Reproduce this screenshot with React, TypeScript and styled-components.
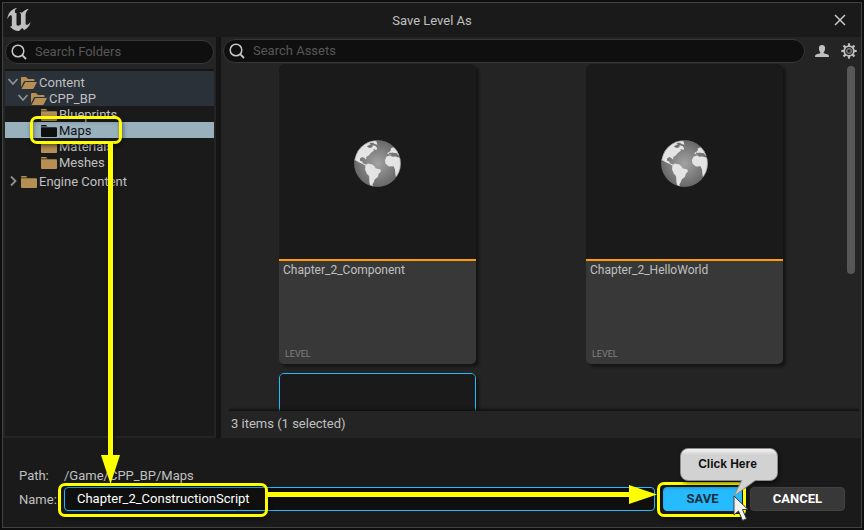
import React from "react";
import styled, { createGlobalStyle, css } from "styled-components";

const GlobalStyle = createGlobalStyle`
  *, *::before, *::after { box-sizing: border-box; }
  body {
    margin: 0;
    background: #0e0e0e;
    color: #c0c0c0;
    font-family: Roboto, "Liberation Sans", sans-serif;
    font-size: 13px;
    line-height: 16px;
  }
  button, input { font: inherit; color: inherit; }
`;

const Page = styled.div`
  height: 100vh;
  padding: 2px;
`;

const Dialog = styled.main`
  position: relative;
  display: flex;
  flex-direction: column;
  height: 100%;
  border: 1px solid #424242;
  background: #1a1a1a;
`;

const TitleBar = styled.header`
  display: grid;
  grid-template-columns: 40px 1fr 40px;
  align-items: center;
  height: 34px;
  flex: none;
`;

const Logo = styled.svg`
  width: 24px;
  height: 24px;
  margin-left: 4px;
`;

const Title = styled.h1`
  margin: 0;
  padding-top: 2px;
  font-size: 13px;
  font-weight: 400;
  text-align: center;
`;

const IconButton = styled.button`
  display: grid;
  place-items: center;
  width: 20px;
  height: 20px;
  padding: 0;
  border: 0;
  background: none;
`;

const CloseButton = styled(IconButton)`
  justify-self: end;
  margin-right: 11px;
`;

const Body = styled.div`
  display: flex;
  flex: 1;
  min-height: 0;
  gap: 5px;
  background: #141414;
`;

const FolderPanel = styled.section`
  display: flex;
  flex-direction: column;
  width: 213px;
  flex: none;
  padding: 3px 2px 2px;
  background: #242424;
`;

const SearchBox = styled.label`
  display: flex;
  align-items: center;
  gap: 8px;
  height: 24px;
  flex: 1;
  padding: 0 5px;
  border: 1px solid #383838;
  border-radius: 12px;
  background: #0f0f0f;
`;

const SearchInput = styled.input`
  flex: 1;
  min-width: 0;
  padding: 0;
  border: 0;
  outline: 0;
  background: none;
  &::placeholder { color: #575757; opacity: 1; }
`;

const SearchRow = styled.div`
  display: flex;
  flex: none;
`;

const Tree = styled.ul`
  flex: 1;
  margin: 5px 0 0;
  padding: 0;
  list-style: none;
  border-top: 2px solid #161616;
  background: #1a1a1a;
`;

const TreeRow = styled.li<{ $tone?: "path" | "selected"; $root?: boolean }>`
  position: relative;
  padding-top: ${(p) => (p.$root ? "3px" : "0")};
  ${(p) => p.$tone === "path" && css`background: #2b3139;`}
  ${(p) => p.$tone === "selected" && css`background: #99b1bd; color: #0f0f0f;`}
`;

const TreeButton = styled.button<{ $depth: number }>`
  display: flex;
  align-items: center;
  width: 100%;
  height: 16px;
  padding: 2px 0 0 ${(p) => 2 + p.$depth * 10}px;
  border: 0;
  background: none;
  text-align: left;
  white-space: nowrap;
`;

const Chevron = styled.svg`
  width: 12px;
  height: 12px;
  margin-right: 1px;
  flex: none;
`;

const FolderGlyph = styled.svg`
  width: 18px;
  height: 14px;
  margin-right: 1px;
  flex: none;
`;

const highlight = css`
  border: 3px solid #ffff00;
  border-radius: 7px;
  box-shadow: 1px 2px 4px rgba(0, 0, 0, 0.5), inset 1px 2px 4px rgba(0, 0, 0, 0.35);
  pointer-events: none;
`;

const FolderHighlight = styled.span`
  ${highlight}
  position: absolute;
  z-index: 2;
  left: 25px;
  top: -6px;
  width: 92px;
  height: 28px;
`;

const AssetPanel = styled.section`
  display: flex;
  flex-direction: column;
  flex: 1;
  min-width: 0;
  background: #242424;
`;

const AssetToolbar = styled.div`
  display: flex;
  align-items: center;
  flex: none;
  gap: 7px;
  padding: 2px 2px 0 2px;
`;

const AssetView = styled.div`
  display: flex;
  flex: 1;
  min-height: 0;
  margin-right: 6px;
  overflow: hidden;
`;

const AssetGrid = styled.div`
  display: grid;
  flex: 1;
  grid-template-columns: 1fr 1fr;
  justify-items: center;
  align-content: start;
  gap: 9px 0;
  padding: 1px 9px 0 3px;
`;

const Card = styled.article<{ $selected?: boolean }>`
  display: flex;
  flex-direction: column;
  width: 197px;
  height: 300px;
  overflow: hidden;
  border-radius: 5px;
  border: ${(p) => (p.$selected ? "1px solid #26bbff" : "0")};
  background: #383838;
  box-shadow: 3px 3px 3px rgba(0, 0, 0, 0.45);
`;

const Thumb = styled.div`
  display: grid;
  place-items: center;
  height: 197px;
  flex: none;
  padding-top: 3px;
  border-bottom: 2px solid #ff9c00;
  background: #1a1a1a;
`;

const CardInfo = styled.div`
  display: flex;
  flex: 1;
  flex-direction: column;
  justify-content: space-between;
  padding: 1px 4px 4px;
`;

const CardName = styled.h2`
  margin: 0;
  font-size: 12px;
  font-weight: 400;
`;

const CardType = styled.span`
  padding-left: 2px;
  color: #808080;
  font-size: 9px;
  line-height: 12px;
`;

const ScrollThumb = styled.div`
  width: 8px;
  height: 208px;
  margin-top: 3px;
  border-radius: 4px;
  background: #575757;
  flex: none;
`;

const StatusBar = styled.div`
  flex: none;
  position: relative;
  margin-left: 7px;
  padding: 5px 3px 6px;
  background: #242424;
  box-shadow: 0 -1px 3px #0a0a0a;
  clip-path: inset(-5px 2px 0 0);
`;

const Footer = styled.form`
  display: grid;
  grid-template-columns: 45px 1fr auto;
  align-items: center;
  gap: 3px 0;
  flex: none;
  padding: 30px 16px 16px;
`;

const PathValue = styled.output`
  grid-column: 2 / -1;
`;

const NameLabel = styled.label`
  padding-top: 2px;
`;

const NameField = styled.div`
  position: relative;
`;

const NameInput = styled.input`
  display: block;
  width: 100%;
  height: 24px;
  padding: 0 12px 2px;
  border: 1px solid #26bbff;
  border-radius: 4px;
  outline: 0;
  background: #0f0f0f;
  color: #ffffff;
`;

const NameHighlight = styled.span`
  ${highlight}
  position: absolute;
  z-index: 2;
  left: -6px;
  top: -4px;
  width: 210px;
  height: 34px;
`;

const RightArrow = styled.div`
  position: absolute;
  z-index: 3;
  display: flex;
  align-items: center;
  left: 203px;
  right: -2px;
  top: -2px;
  height: 19px;
`;

const DownArrow = styled.div`
  position: absolute;
  z-index: 3;
  display: flex;
  flex-direction: column;
  align-items: center;
  left: 98px;
  top: 139px;
  bottom: 43px;
  width: 19px;
`;

const ArrowShaft = styled.span<{ $vertical?: boolean }>`
  flex: 1;
  ${(p) => (p.$vertical ? "width: 5px;" : "height: 5px;")}
  background: #ffff00;
  box-shadow: 1px 1px 3px rgba(0, 0, 0, 0.5);
`;

const ArrowHead = styled.svg`
  flex: none;
  display: block;
`;

const Actions = styled.div`
  display: flex;
  gap: 8px;
  padding-left: 8px;
`;

const SaveSlot = styled.div`
  position: relative;
`;

const ActionButton = styled.button<{ $primary?: boolean }>`
  display: block;
  width: ${(p) => (p.$primary ? "79px" : "95px")};
  height: 24px;
  padding: 0;
  border: 1px solid ${(p) => (p.$primary ? "#26bbff" : "#424242")};
  border-radius: 4px;
  background: ${(p) => (p.$primary ? "#26bbff" : "#383838")};
  color: ${(p) => (p.$primary ? "#1c2f3a" : "#ffffff")};
  font-size: 13px;
  font-weight: 700;
`;

const SaveHighlight = styled.span`
  ${highlight}
  position: absolute;
  z-index: 2;
  left: -6px;
  right: -4px;
  top: -5px;
  height: 35px;
`;

const Balloon = styled.div`
  position: absolute;
  z-index: 4;
  left: 17px;
  bottom: 30px;
  width: 98px;
  height: 33px;
  padding: 8px 3px 0 0;
  border: 1px solid #8c8c8c;
  border-radius: 8px;
  background: linear-gradient(#f4f4f4, #d2d2d2 6px);
  box-shadow: 1px 2px 4px rgba(0, 0, 0, 0.6);
  color: #101010;
  font: 700 12px/15px "Liberation Sans", Arial, sans-serif;
  text-align: center;
`;

const BalloonTail = styled.svg`
  position: absolute;
  left: 53px;
  top: 30px;
`;

const Pointer = styled.svg`
  position: absolute;
  z-index: 5;
  left: 70px;
  top: 8px;
`;

const SearchIcon = () => (
  <svg width="16" height="16" viewBox="0 0 16 16" fill="none" stroke="#c8c8c8" aria-hidden="true">
    <circle cx="7" cy="7" r="5.8" strokeWidth="1.5" />
    <path d="M11.2 11.2 15 15" strokeWidth="1.8" />
  </svg>
);

const Folder = ({ open, dark }: { open?: boolean; dark?: boolean }) => (
  <FolderGlyph viewBox="0 0 18 14" fill={dark ? "#0f0f0f" : "#b68f55"} aria-hidden="true">
    {open ? (
      <>
        <path d="M1 11.2V1.8Q1 1 1.8 1H6l2 2h5.500q1 0 1 1v1H5.200Q4.200 5 3.800 5.800Z" />
        <path d="M5.300 6H17L13.900 12Q13.600 13 12.500 13H1.500Z" />
      </>
    ) : (
      <>
        <path d="M1 1.800Q1 1 1.800 1H6L7.500 2.400H1Z" />
        <path d="M1 3.200H16Q17 3.200 17 4.200V12Q17 13 16 13H2Q1 13 1 12Z" />
      </>
    )}
  </FolderGlyph>
);

const Globe = () => (
  <svg width="47" height="47" viewBox="42 28 140 140" aria-hidden="true">
    <defs>
      <radialGradient id="ocean">
        <stop offset="0" stopColor="#a3a3a3" />
        <stop offset="1" stopColor="#686868" />
      </radialGradient>
      <clipPath id="disc">
        <circle cx="112" cy="98" r="69" />
      </clipPath>
    </defs>
    <circle cx="112" cy="98" r="69" fill="url(#ocean)" />
    <g clipPath="url(#disc)" fill="#e4e4e4">
      <path d="M40 92V60L76 30H108L110 36 112 42 104 40 98 36 88 37 92 41 86 44 80 47 88 52 96 50 98 44 106 46 111 52 109 58 100 55 101 60 92 67 86 74 79 78 78 87 74 82 67 79 60 83 60 90 67 92 68 97 78 101 76 104 66 99 56 94 46 88Z" />
      <path d="M76 103 83 98 97 101 104 108 106 112 121 116 122 122 116 128 113 138 104 145 100 155 97 160 100 168 92 168 88 156 87 136 80 128 75 116Z" />
      <path d="M142 70V66L148 63 152 58 151 53 158 50 180 50V76L172 73 168 67 162 69 158 65 152 67 150 71Z" />
      <path d="M139 77 150 74 156 78 166 77 184 82V110L170 140 166 136 164 116 160 106 146 107 136 99 134 88Z" />
    </g>
    <path d="M146 66h6v4h-6zM160 66l10 2 3 5h-9l-8-1z" fill="#777" />
    <circle cx="112" cy="98" r="68.500" fill="none" stroke="#777" strokeWidth="1.500" />
  </svg>
);

const UserIcon = () => (
  <svg width="16" height="16" viewBox="0 0 16 16" fill="#c0c0c0" aria-hidden="true">
    <path d="M8 2C10.200 2 11.300 3.500 11.100 5.700 10.900 7.500 10.200 8.600 9.700 9.200V10.300L14 11.600Q15 12 15 14H1Q1 12 2 11.600L6.300 10.300V9.200C5.800 8.600 5.100 7.500 4.900 5.700 4.700 3.500 5.800 2 8 2Z" />
  </svg>
);

const GearIcon = () => (
  <svg width="16" height="16" viewBox="0 0 16 16" fill="none" stroke="#c0c0c0" aria-hidden="true">
    <circle cx="8" cy="8" r="4.800" strokeWidth="1.800" />
    <circle cx="8" cy="8" r="2.300" stroke="#808080" strokeWidth="1.300" />
    {[0, 45, 90, 135, 180, 225, 270, 315].map((angle) => (
      <path key={angle} d="M8 .3V3.200" strokeWidth="2.200" transform={`rotate(${angle} 8 8)`} />
    ))}
  </svg>
);

type Node = {
  name: string;
  depth: number;
  expanded?: boolean;
  tone?: "path" | "selected";
};

const folders: Node[] = [
  { name: "Content", depth: 0, expanded: true, tone: "path" },
  { name: "CPP_BP", depth: 1, expanded: true, tone: "path" },
  { name: "Blueprints", depth: 2 },
  { name: "Maps", depth: 2, tone: "selected" },
  { name: "Materials", depth: 2 },
  { name: "Meshes", depth: 2 },
  { name: "Engine Content", depth: 0, expanded: false },
];

const FolderRow = ({ node }: { node: Node }) => (
  <TreeRow $tone={node.tone} $root={node.depth === 0}>
    <TreeButton type="button" $depth={node.depth}>
      <Chevron viewBox="0 0 12 12" fill="none" stroke="#909090" strokeWidth="1.800" aria-hidden="true">
        {node.expanded === true && <path d="M1.500 2 6 7l4.500-5" />}
        {node.expanded === false && <path d="M4 0.500 8.500 5 4 9.500" />}
      </Chevron>
      <Folder open={node.expanded} dark={node.tone === "selected"} />
      {node.name}
    </TreeButton>
    {node.tone === "selected" && <FolderHighlight />}
  </TreeRow>
);

const AssetCard = ({ name }: { name: string }) => (
  <Card>
    <Thumb>
      <Globe />
    </Thumb>
    <CardInfo>
      <CardName>{name}</CardName>
      <CardType>LEVEL</CardType>
    </CardInfo>
  </Card>
);

export default function App() {
  return (
    <>
      <GlobalStyle />
      <Page>
        <Dialog>
          <TitleBar>
            <Logo viewBox="4.400 5.200 15 14.400" fill="#c0c0c0" aria-hidden="true">
              <path d="M19.130 13.729c-.206.997-1.126 3.557-4.060 4.942l-1.179-1.325-1.988 2a7.338 7.338 0 0 1-5.804-2.978 2.859 2.859 0 0 0 .650.123c.326.006.678-.114.678-.660v-5.394a.890.890 0 0 0-1.116-.890c-.920.212-1.656 2.509-1.656 2.509a7.304 7.304 0 0 1 2.528-5.597 7.408 7.408 0 0 1 3.730-1.721c-1.006.573-1.570 1.507-1.570 2.290 0 1.262.760 1.109.984.923v7.280a1.157 1.157 0 0 0 .148.256 1.075 1.075 0 0 0 .880.445c.760 0 1.747-.868 1.747-.868V9.172c0-.600-.452-1.324-.905-1.572 0 0 .838-.149 1.484.346a5.537 5.537 0 0 1 .387-.425c1.508-1.480 2.929-1.902 4.112-2.112 0 0-2.151 1.690-2.151 3.960 0 1.687.043 5.801.043 5.801.799.771 1.986-.342 3.059-1.441Z" />
            </Logo>
            <Title>Save Level As</Title>
            <CloseButton type="button" aria-label="Close">
              <svg width="12" height="12" viewBox="0 0 12 12" stroke="#c8c8c8" strokeWidth="1.500" aria-hidden="true">
                <path d="M1 1 11 11M11 1 1 11" />
              </svg>
            </CloseButton>
          </TitleBar>

          <Body>
            <FolderPanel>
              <SearchRow>
                <SearchBox>
                  <SearchIcon />
                  <SearchInput placeholder="Search Folders" aria-label="Search Folders" />
                </SearchBox>
              </SearchRow>
              <Tree>
                {folders.map((node) => (
                  <FolderRow key={node.name} node={node} />
                ))}
              </Tree>
            </FolderPanel>

            <AssetPanel>
              <AssetToolbar>
                <SearchBox>
                  <SearchIcon />
                  <SearchInput placeholder="Search Assets" aria-label="Search Assets" />
                </SearchBox>
                <IconButton type="button" aria-label="Owner filter">
                  <UserIcon />
                </IconButton>
                <IconButton type="button" aria-label="Settings">
                  <GearIcon />
                </IconButton>
              </AssetToolbar>
              <AssetView>
                <AssetGrid>
                  <AssetCard name="Chapter_2_Component" />
                  <AssetCard name="Chapter_2_HelloWorld" />
                  <Card $selected>
                    <Thumb />
                  </Card>
                </AssetGrid>
                <ScrollThumb />
              </AssetView>
              <StatusBar>3 items (1 selected)</StatusBar>
            </AssetPanel>
          </Body>

          <Footer onSubmit={(event: React.FormEvent) => event.preventDefault()}>
            <span>Path:</span>
            <PathValue>/Game/CPP_BP/Maps</PathValue>
            <NameLabel htmlFor="level-name">Name:</NameLabel>
            <NameField>
              <NameInput id="level-name" defaultValue="Chapter_2_ConstructionScript" />
              <NameHighlight />
              <RightArrow>
                <ArrowShaft />
                <ArrowHead width="28" height="19" viewBox="0 0 28 19" fill="#ffff00" aria-hidden="true">
                  <path d="M0 0 28 9.500 0 19Z" />
                </ArrowHead>
              </RightArrow>
            </NameField>
            <Actions>
              <SaveSlot>
                <ActionButton type="submit" $primary>
                  SAVE
                </ActionButton>
                <SaveHighlight />
                <Balloon>
                  Click Here
                  <BalloonTail width="24" height="18" viewBox="0 0 24 18" aria-hidden="true">
                    <path d="M8 0 0 17 22 1V0Z" fill="#d2d2d2" />
                    <path d="M8 1 0 17 22 1" fill="none" stroke="#8c8c8c" />
                  </BalloonTail>
                </Balloon>
                <Pointer width="18" height="27" viewBox="0 0 18 27" aria-hidden="true">
                  <path d="M1 1V20L5.500 16 9.500 25.500 13.500 23.800 9.500 14.500H15Z" fill="#f2f2f2" stroke="#3a3a3a" />
                </Pointer>
              </SaveSlot>
              <ActionButton type="button">CANCEL</ActionButton>
            </Actions>
          </Footer>

          <DownArrow>
            <ArrowShaft $vertical />
            <ArrowHead width="19" height="29" viewBox="0 0 19 29" fill="#ffff00" aria-hidden="true">
              <path d="M0 0H19L9.500 29Z" />
            </ArrowHead>
          </DownArrow>
        </Dialog>
      </Page>
    </>
  );
}
